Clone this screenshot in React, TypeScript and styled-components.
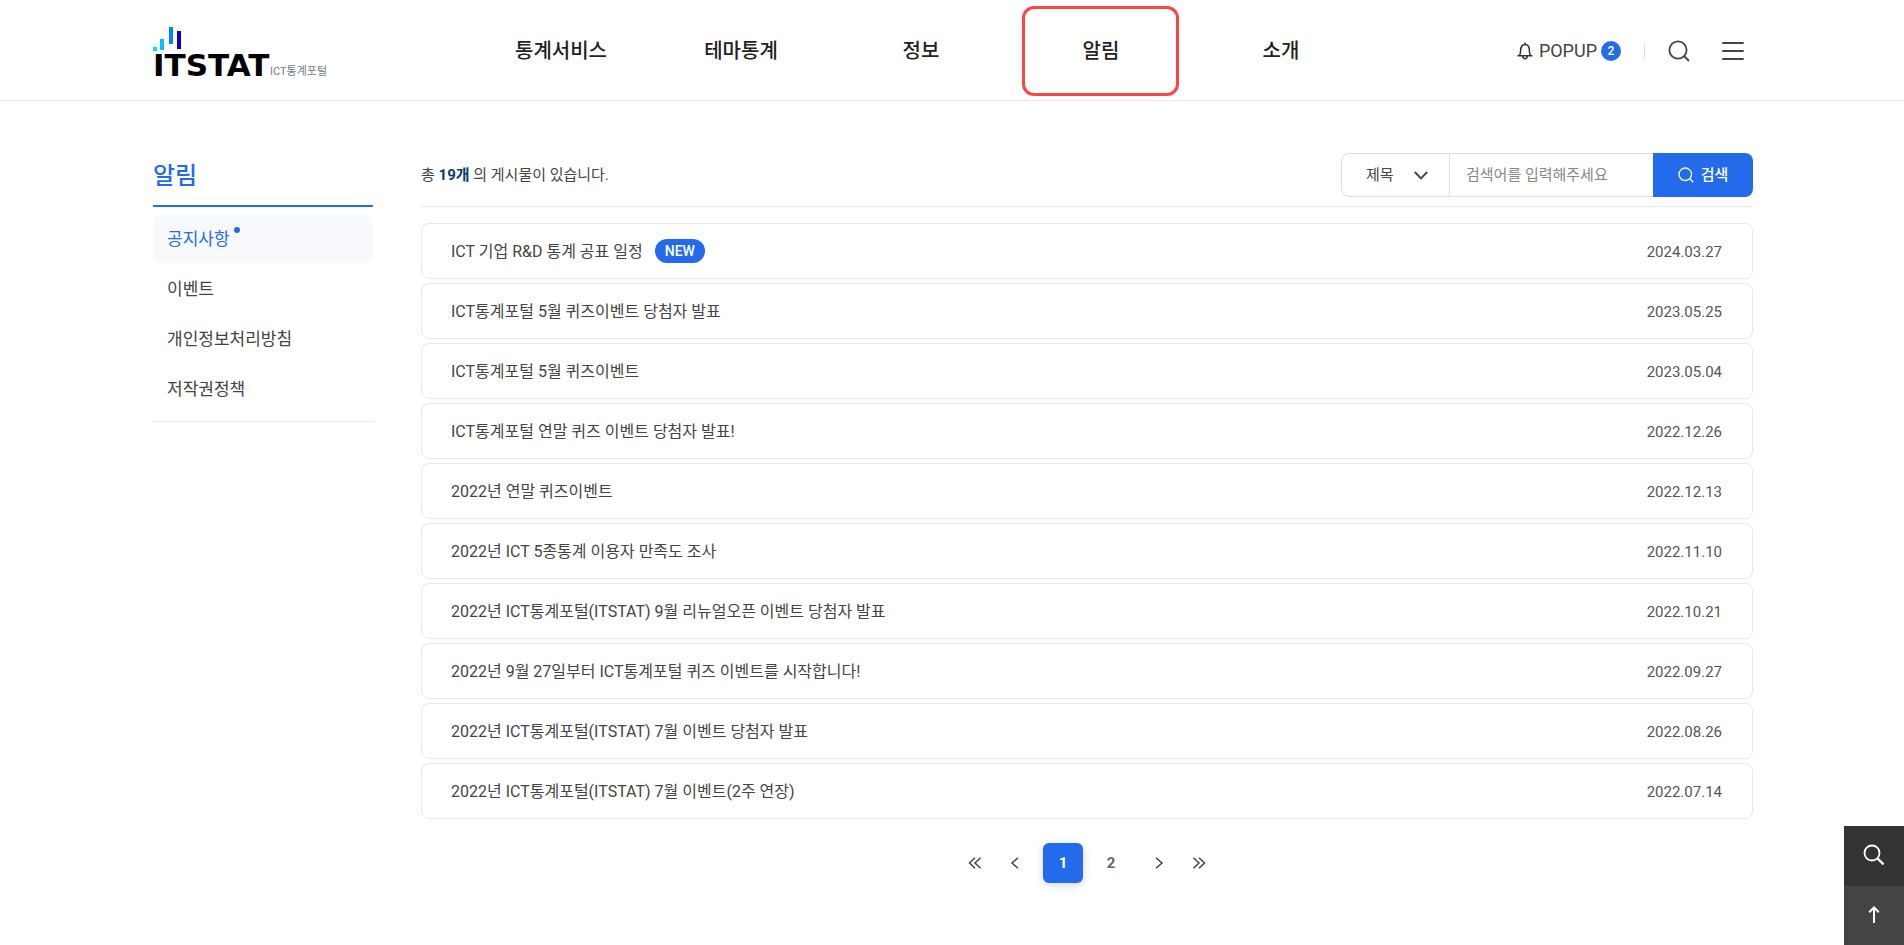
import React from "react";
import styled, { createGlobalStyle, css } from "styled-components";

const blue = "#246beb";

const GlobalStyle = createGlobalStyle`
  *, *::before, *::after { box-sizing: border-box; }
  body {
    margin: 0;
    background: #fff;
    color: #444;
    font-family: Roboto, "Noto Sans CJK KR", sans-serif;
    font-size: 16px;
    line-height: 24px;
  }
  a { color: inherit; text-decoration: none; }
  button, input, select { font: inherit; color: inherit; margin: 0; }
  button { padding: 0; border: 0; background: none; cursor: pointer; }
  h1, h2, p, ul, ol { margin: 0; padding: 0; }
  ul, ol { list-style: none; }
  svg { display: block; flex: none; }
`;

const container = css`
  width: 100%;
  max-width: 1602px;
  margin: 0 auto;
  padding-left: 2px;
`;

const Header = styled.header`
  border-bottom: 1px solid #e9e9e9;
`;

const HeaderInner = styled.div`
  ${container}
  display: flex;
  align-items: center;
  height: 100px;
`;

const LogoLink = styled.a`
  flex: 0 1 318px;
  padding-top: 10px;
`;

const Nav = styled.nav`
  display: flex;
`;

const NavItem = styled.a<{ $marked?: boolean }>`
  position: relative;
  display: flex;
  align-items: center;
  justify-content: center;
  width: 180px;
  height: 100px;
  padding-top: 2px;
  color: #222;
  font-size: 20px;
  font-weight: 500;

  ${({ $marked }) =>
    $marked &&
    css`
      &::after {
        content: "";
        position: absolute;
        inset: 6px 12px 4px 11px;
        border: 3px solid #fb4547;
        border-radius: 12px;
      }
    `}
`;

const Utilities = styled.div`
  display: flex;
  align-items: center;
  margin-left: auto;
  padding-top: 2px;
`;

const PopupButton = styled.button`
  display: flex;
  align-items: center;
  gap: 6px;
  font-size: 18px;
`;

const CountBadge = styled.span`
  width: 20px;
  height: 20px;
  margin-left: -2px;
  border-radius: 50%;
  background: ${blue};
  color: #fff;
  font-size: 12px;
  font-weight: 500;
  line-height: 20px;
  text-align: center;
`;

const Divider = styled.span`
  width: 1px;
  height: 16px;
  margin: 0 14px 0 23px;
  background: #ddd;
`;

const IconButton = styled.button`
  display: flex;
  align-items: center;
  justify-content: center;
  width: 40px;
  height: 40px;

  & + & {
    margin-left: 14px;
  }
`;

const Main = styled.main`
  ${container}
  display: flex;
  align-items: flex-start;
  gap: 48px;
  padding-top: 52px;
`;

const Sidebar = styled.aside`
  flex: none;
  width: 220px;
`;

const SideTitle = styled.h1`
  height: 54px;
  border-bottom: 2px solid ${blue};
  color: ${blue};
  font-size: 24px;
  font-weight: 500;
  line-height: 46px;
`;

const SideMenu = styled.ul`
  display: flex;
  flex-direction: column;
  gap: 2px;
  padding: 8px 0;
  border-bottom: 1px solid #e9e9e9;
`;

const SideLink = styled.a<{ $active?: boolean }>`
  display: flex;
  height: 48px;
  padding: 0 14px;
  border-radius: 8px;
  font-size: 17px;
  line-height: 48px;

  ${({ $active }) =>
    $active &&
    css`
      background: #f7f9fc;
      color: ${blue};

      &::after {
        content: "";
        width: 6px;
        height: 6px;
        margin: 12px 0 0 4px;
        border-radius: 50%;
        background: ${blue};
      }
    `}
`;

const Content = styled.section`
  flex: 1;
  min-width: 0;
`;

const Toolbar = styled.div`
  display: flex;
  align-items: center;
  justify-content: space-between;
  padding-bottom: 9px;
  border-bottom: 1px solid #e9e9e9;
`;

const Total = styled.p`
  font-size: 15px;

  strong {
    color: #063a74;
    font-weight: 700;
  }
`;

const SearchForm = styled.form`
  display: flex;
  height: 44px;
  font-size: 15px;
`;

const SelectWrap = styled.div`
  position: relative;
  width: 109px;

  svg {
    position: absolute;
    top: 18px;
    right: 22px;
    pointer-events: none;
  }
`;

const Select = styled.select`
  appearance: none;
  width: 100%;
  height: 100%;
  padding: 0 24px;
  border: 1px solid #ddd;
  border-radius: 8px 0 0 8px;
  background: #fff;
`;

const SearchInput = styled.input`
  width: 203px;
  padding: 0 16px;
  border: solid #ddd;
  border-width: 1px 0;
  border-radius: 0;
  background: #fff;

  &::placeholder {
    color: #888;
    opacity: 1;
  }
`;

const SearchButton = styled.button`
  display: flex;
  align-items: center;
  justify-content: center;
  gap: 7px;
  width: 100px;
  border-radius: 0 8px 8px 0;
  background: ${blue};
  color: #fff;
  font-weight: 500;
`;

const NoticeList = styled.ul`
  display: flex;
  flex-direction: column;
  gap: 4px;
  margin-top: 16px;
`;

const NoticeLink = styled.a`
  display: flex;
  align-items: center;
  height: 56px;
  padding: 2px 30px 0 29px;
  border: 1px solid #e9e9e9;
  border-radius: 8px;
`;

const NewBadge = styled.span`
  height: 24px;
  margin: 0 0 2px 12px;
  padding: 0 10px;
  border-radius: 12px;
  background: ${blue};
  color: #fff;
  font-size: 14px;
  font-weight: 500;
  line-height: 24px;
`;

const NoticeDate = styled.time`
  margin-left: auto;
  color: #555;
  font-size: 15px;
`;

const Pagination = styled.nav`
  display: flex;
  justify-content: center;
  gap: 8px;
  margin: 24px 0 32px;
`;

const PageGroup = styled.div`
  display: flex;
`;

const PageButton = styled.button<{ $current?: boolean }>`
  display: flex;
  align-items: center;
  justify-content: center;
  width: 40px;
  height: 40px;
  border-radius: 6px;
  color: #666;
  font-size: 15px;
  font-weight: 700;

  ${({ $current }) =>
    $current &&
    css`
      background: ${blue};
      box-shadow: 0 2px 8px rgba(30, 50, 110, 0.2);
      color: #fff;
    `}
`;

const QuickButtons = styled.div`
  position: fixed;
  right: 0;
  bottom: 0;
`;

const QuickButton = styled.button<{ $shade: string }>`
  display: flex;
  align-items: center;
  justify-content: center;
  width: 60px;
  height: 60px;
  padding-bottom: 2px;
  background: ${({ $shade }) => $shade};

  &:last-child {
    height: 59px;
  }
`;

const Logo = () => (
  <svg width="180" height="64" viewBox="0 0 180 64" role="img" aria-label="ITSTAT ICT통계포털">
    <rect x="0" y="24" width="4" height="4" fill="#00e0fa" />
    <rect x="7" y="16" width="4" height="11" fill="#00c2ff" />
    <rect x="16" y="4" width="4" height="17" fill="#0084ff" />
    <rect x="24" y="8" width="4" height="18" fill="#0a00cc" />
    <text x="0" y="53" fill="#000" fontFamily="'DejaVu Sans', sans-serif" fontSize="31" fontWeight="700">
      ITSTAT
    </text>
    <text x="117" y="52" fill="#6f7c88" fontFamily="Roboto, 'Noto Sans CJK KR', sans-serif" fontSize="11">
      ICT통계포털
    </text>
  </svg>
);

const BellIcon = () => (
  <svg width="16" height="18" viewBox="0 0 16 18" fill="none" stroke="#333" strokeWidth="1.5" strokeLinejoin="round">
    <path d="M.5 13.700h15M2.400 13.500c1-1.400 1.200-2.800 1.200-4.700C3.600 5 5.400 2.600 8 2.600s4.400 2.400 4.400 6.200c0 1.900.2 3.300 1.200 4.700M8 2.600V.6M5.600 14c.2 1.600 1.100 2.700 2.400 2.700s2.200-1.100 2.400-2.700" />
  </svg>
);

type LensProps = { size: number; color: string; width: number };

const LensIcon = ({ size, color, width }: LensProps) => (
  <svg width={size} height={size} viewBox="0 0 22 22" fill="none" stroke={color} strokeWidth={width}>
    <circle cx="10" cy="10" r="8.600" />
    <path d="M16 16l5 5" />
  </svg>
);

const FloatLensIcon = () => (
  <svg width="22" height="22" viewBox="0 0 22 22" fill="none" stroke="#fff" strokeWidth="1.8">
    <circle cx="9" cy="9" r="7.500" />
    <path d="M14.400 14.400l6.200 6" strokeWidth="2.2" />
  </svg>
);

const MenuIcon = () => (
  <svg width="22" height="20" viewBox="0 0 22 20" stroke="#444" strokeWidth="1.8" strokeLinecap="round">
    <path d="M1 2h20M1 10h20M1 18h20" />
  </svg>
);

const ChevronIcon = () => (
  <svg width="14" height="9" viewBox="0 0 14 9" fill="none" stroke="#444" strokeWidth="2">
    <path d="M.8 1L7 7.400 13.200 1" />
  </svg>
);

type ArrowProps = { double?: boolean; flip?: boolean };

const ArrowIcon = ({ double, flip }: ArrowProps) => (
  <svg width="14" height="12" viewBox="0 0 14 12" fill="none" stroke="#444" strokeWidth="1.5">
    <g transform={flip ? "matrix(-1 0 0 1 14 0)" : undefined}>
      {double ? <path d="M7 .7L1.500 6 7 11.300M12.500 .7L7 6l5.500 5.300" /> : <path d="M10 .7L4 6l6 5.300" />}
    </g>
  </svg>
);

const UpIcon = () => (
  <svg width="12" height="17" viewBox="0 0 12 17" fill="none" stroke="#fff" strokeWidth="2">
    <path d="M6 17V1.800M1.200 6.200L6 1.500l4.800 4.700" />
  </svg>
);

const menu = ["통계서비스", "테마통계", "정보", "알림", "소개"];
const sideMenu = ["공지사항", "이벤트", "개인정보처리방침", "저작권정책"];
const notices = [
  { title: "ICT 기업 R&D 통계 공표 일정", date: "2024.03.27", isNew: true },
  { title: "ICT통계포털 5월 퀴즈이벤트 당첨자 발표", date: "2023.05.25" },
  { title: "ICT통계포털 5월 퀴즈이벤트", date: "2023.05.04" },
  { title: "ICT통계포털 연말 퀴즈 이벤트 당첨자 발표!", date: "2022.12.26" },
  { title: "2022년 연말 퀴즈이벤트", date: "2022.12.13" },
  { title: "2022년 ICT 5종통계 이용자 만족도 조사", date: "2022.11.10" },
  { title: "2022년 ICT통계포털(ITSTAT) 9월 리뉴얼오픈 이벤트 당첨자 발표", date: "2022.10.21" },
  { title: "2022년 9월 27일부터 ICT통계포털 퀴즈 이벤트를 시작합니다!", date: "2022.09.27" },
  { title: "2022년 ICT통계포털(ITSTAT) 7월 이벤트 당첨자 발표", date: "2022.08.26" },
  { title: "2022년 ICT통계포털(ITSTAT) 7월 이벤트(2주 연장)", date: "2022.07.14" },
];

export default function App() {
  return (
    <>
      <GlobalStyle />
      <Header>
        <HeaderInner>
          <LogoLink href="#">
            <Logo />
          </LogoLink>
          <Nav aria-label="주 메뉴">
            {menu.map((name) => (
              <NavItem key={name} href="#" $marked={name === "알림"}>
                {name}
              </NavItem>
            ))}
          </Nav>
          <Utilities>
            <PopupButton type="button">
              <BellIcon />
              POPUP
              <CountBadge>2</CountBadge>
            </PopupButton>
            <Divider />
            <IconButton type="button" aria-label="검색 열기">
              <LensIcon size={22} color="#444" width={1.8} />
            </IconButton>
            <IconButton type="button" aria-label="전체 메뉴">
              <MenuIcon />
            </IconButton>
          </Utilities>
        </HeaderInner>
      </Header>

      <Main>
        <Sidebar>
          <SideTitle>알림</SideTitle>
          <SideMenu>
            {sideMenu.map((name, index) => (
              <li key={name}>
                <SideLink href="#" $active={index === 0}>
                  {name}
                </SideLink>
              </li>
            ))}
          </SideMenu>
        </Sidebar>

        <Content>
          <Toolbar>
            <Total>
              총 <strong>19개</strong> 의 게시물이 있습니다.
            </Total>
            <SearchForm role="search" onSubmit={(event) => event.preventDefault()}>
              <SelectWrap>
                <Select aria-label="검색 구분">
                  <option>제목</option>
                  <option>내용</option>
                </Select>
                <ChevronIcon />
              </SelectWrap>
              <SearchInput type="text" aria-label="검색어" placeholder="검색어를 입력해주세요" />
              <SearchButton type="submit">
                <LensIcon size={16} color="#fff" width={1.8} />
                검색
              </SearchButton>
            </SearchForm>
          </Toolbar>

          <NoticeList>
            {notices.map((notice) => (
              <li key={notice.title}>
                <NoticeLink href="#">
                  {notice.title}
                  {notice.isNew && <NewBadge>NEW</NewBadge>}
                  <NoticeDate>{notice.date}</NoticeDate>
                </NoticeLink>
              </li>
            ))}
          </NoticeList>

          <Pagination aria-label="페이지">
            <PageGroup>
              <PageButton type="button" aria-label="처음">
                <ArrowIcon double />
              </PageButton>
              <PageButton type="button" aria-label="이전">
                <ArrowIcon />
              </PageButton>
            </PageGroup>
            <PageButton type="button" $current aria-current="page">
              1
            </PageButton>
            <PageButton type="button">2</PageButton>
            <PageGroup>
              <PageButton type="button" aria-label="다음">
                <ArrowIcon flip />
              </PageButton>
              <PageButton type="button" aria-label="마지막">
                <ArrowIcon double flip />
              </PageButton>
            </PageGroup>
          </Pagination>
        </Content>
      </Main>

      <QuickButtons>
        <QuickButton type="button" $shade="#333" aria-label="통합 검색">
          <FloatLensIcon />
        </QuickButton>
        <QuickButton type="button" $shade="#444" aria-label="맨 위로">
          <UpIcon />
        </QuickButton>
      </QuickButtons>
    </>
  );
}
